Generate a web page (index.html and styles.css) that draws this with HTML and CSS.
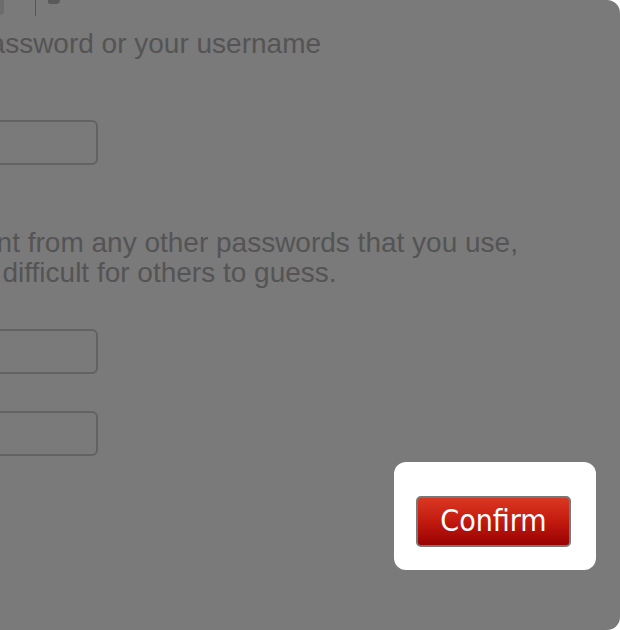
FILE: index.html
```html
<!DOCTYPE html>
<html>
<head>
<meta charset="utf-8">
<link rel="stylesheet" href="styles.css">
</head>
<body>
<div class="panel">
  <div class="crumbs">
    <span class="crumb-end"></span>
    <span class="crumb-sep"></span>
    <span class="crumb-icon"></span>
  </div>
  <div class="line line-user">password or your username</div>
  <div class="field field-1"></div>
  <div class="para">
    <div class="line line-p1">ent from any other passwords that you use,</div>
    <div class="line line-p2">and difficult for others to guess.</div>
  </div>
  <div class="field field-2"></div>
  <div class="field field-3"></div>
  <div class="actions">
    <div class="spot">
      <button class="confirm">Confirm</button>
    </div>
  </div>
</div>
</body>
</html>
```
FILE: styles.css
```css
html, body {
  margin: 0;
  padding: 0;
  background: #ffffff;
  overflow: hidden;
}
.panel {
  width: 620px;
  height: 630px;
  background: #7a7a7a;
  border-radius: 0 13px 13px 0;
  overflow: hidden;
  font-family: "Liberation Sans", Arial, sans-serif;
  color: #545454;
}
.crumbs {
  height: 18px;
  display: flex;
  align-items: flex-start;
}
.crumb-end {
  width: 4px;
  height: 15px;
  background: #6c6c6c;
  border-radius: 0 0 6px 0;
}
.crumb-sep {
  width: 1px;
  height: 16px;
  margin-left: 31px;
  background: #555555;
}
.crumb-icon {
  width: 12px;
  height: 4px;
  margin-left: 12px;
  background: #5a5a5a;
  border-radius: 0 0 4px 2px;
}
.line {
  font-size: 28px;
  line-height: 30px;
  white-space: nowrap;
}
.line-user {
  margin-top: 11px;
  margin-left: -26px;
}
.field {
  width: 200px;
  height: 41px;
  margin-left: -106px;
  border: 2px solid #626262;
  border-radius: 6px;
}
.field-1 {
  margin-top: 61px;
}
.para {
  margin-top: 63px;
}
.line-p1 {
  margin-left: -19px;
}
.line-p2 {
  margin-left: -52px;
}
.field-2 {
  margin-top: 41px;
}
.field-3 {
  margin-top: 37px;
}
.actions {
  display: flex;
  justify-content: flex-end;
  padding-right: 24px;
  margin-top: 6px;
}
.spot {
  width: 202px;
  height: 108px;
  box-sizing: border-box;
  padding: 34px 0 0 22px;
  background: #ffffff;
  border-radius: 12px;
}
.confirm {
  display: block;
  width: 155px;
  height: 51px;
  box-sizing: border-box;
  margin: 0;
  padding: 0 0 2px 0;
  border: 2px solid #787878;
  border-radius: 5px;
  background: linear-gradient(to bottom, #da3822 0%, #c21a0f 50%, #980202 100%);
  color: #ffffff;
  font-family: "DejaVu Sans", "Noto Sans", sans-serif;
  font-stretch: condensed;
  font-size: 30px;
  line-height: 45px;
  text-align: center;
}
```
